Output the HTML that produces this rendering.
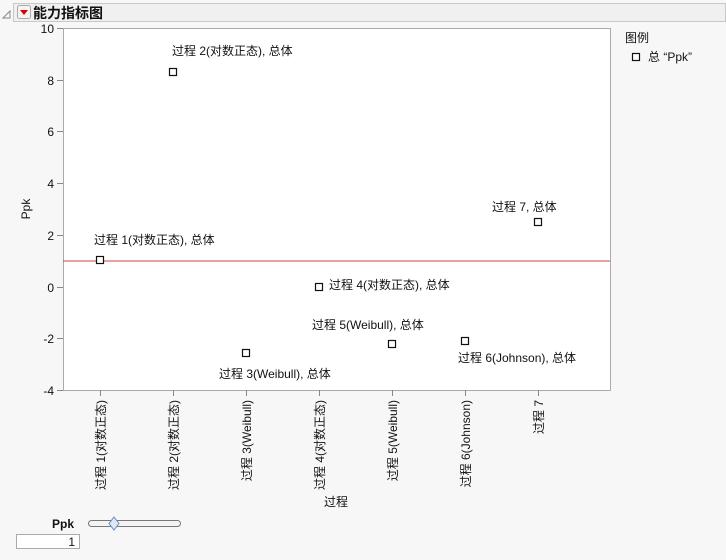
<!DOCTYPE html>
<html><head><meta charset="utf-8"><style>
body{margin:0;background:#f7f7f7;width:726px;height:555px;overflow:hidden;font-family:"Liberation Sans","Noto Sans CJK SC",sans-serif}
svg text{font-family:"Liberation Sans","Noto Sans CJK SC",sans-serif;font-size:12px;fill:#111}
</style></head><body>
<svg width="726" height="555" xmlns="http://www.w3.org/2000/svg">
<rect x="0" y="0" width="726" height="555" fill="#f7f7f7"/>
<path d="M3 18 L10 11 L10 18 Z" fill="none" stroke="#888" stroke-width="1"/>
<rect x="13.5" y="3.5" width="712" height="18" fill="#f0f0f0" stroke="#c8c8c8"/>
<rect x="17.5" y="5.5" width="13" height="13" rx="2" fill="#f4f4f4" stroke="#aaa"/>
<path d="M20 10 L28 10 L24 15 Z" fill="#d00"/>
<text x="33" y="18" style="font-size:14px;font-weight:bold">能力指标图</text>
<rect x="63.5" y="28.5" width="547" height="362" fill="#fff" stroke="#aaa"/>
<line x1="63" y1="261" x2="610" y2="261" stroke="#d04040" stroke-width="1"/>
<g stroke="#888">
<line x1="57" y1="28.5" x2="63" y2="28.5"/><line x1="57" y1="80.5" x2="63" y2="80.5"/><line x1="57" y1="131.5" x2="63" y2="131.5"/><line x1="57" y1="183.5" x2="63" y2="183.5"/><line x1="57" y1="235.5" x2="63" y2="235.5"/><line x1="57" y1="287.5" x2="63" y2="287.5"/><line x1="57" y1="338.5" x2="63" y2="338.5"/><line x1="57" y1="390.5" x2="63" y2="390.5"/>
<line x1="100.5" y1="390" x2="100.5" y2="396"/><line x1="173.5" y1="390" x2="173.5" y2="396"/><line x1="246.5" y1="390" x2="246.5" y2="396"/><line x1="319.5" y1="390" x2="319.5" y2="396"/><line x1="392.5" y1="390" x2="392.5" y2="396"/><line x1="465.5" y1="390" x2="465.5" y2="396"/><line x1="538.5" y1="390" x2="538.5" y2="396"/>
</g>
<g text-anchor="end">
<text x="54" y="33">10</text><text x="54" y="85">8</text><text x="54" y="136">6</text><text x="54" y="188">4</text><text x="54" y="240">2</text><text x="54" y="292">0</text><text x="54" y="343">-2</text><text x="54" y="395">-4</text>
</g>
<text transform="translate(30,209) rotate(-90)" text-anchor="middle">Ppk</text>
<g text-anchor="end">
<text transform="translate(105,400) rotate(-90)">过程 1(对数正态)</text>
<text transform="translate(178,400) rotate(-90)">过程 2(对数正态)</text>
<text transform="translate(251,400) rotate(-90)">过程 3(Weibull)</text>
<text transform="translate(324,400) rotate(-90)">过程 4(对数正态)</text>
<text transform="translate(397,400) rotate(-90)">过程 5(Weibull)</text>
<text transform="translate(470,400) rotate(-90)">过程 6(Johnson)</text>
<text transform="translate(543,400) rotate(-90)">过程 7</text>
</g>
<text x="336" y="506" text-anchor="middle">过程</text>
<g fill="#fff" stroke="#111" stroke-width="1.2">
<rect x="96.5" y="256.5" width="7" height="7"/><rect x="169.5" y="68.5" width="7" height="7"/><rect x="242.5" y="349.5" width="7" height="7"/><rect x="315.5" y="283.5" width="7" height="7"/><rect x="388.5" y="340.5" width="7" height="7"/><rect x="461.5" y="337.5" width="7" height="7"/><rect x="534.5" y="218.5" width="7" height="7"/>
<rect x="632.5" y="53.5" width="7" height="7"/>
</g>
<text x="94" y="244">过程 1(对数正态), 总体</text>
<text x="172" y="55">过程 2(对数正态), 总体</text>
<text x="219" y="378">过程 3(Weibull), 总体</text>
<text x="329" y="289">过程 4(对数正态), 总体</text>
<text x="312" y="329">过程 5(Weibull), 总体</text>
<text x="458" y="362">过程 6(Johnson), 总体</text>
<text x="492" y="211">过程 7, 总体</text>
<text x="625" y="42">图例</text>
<text x="648" y="61">总 “Ppk”</text>
<text x="52" y="528" style="font-weight:bold">Ppk</text>
<rect x="88.5" y="520.5" width="92" height="6" rx="3" fill="#f4f4f4" stroke="#777"/>
<path d="M114 517 L119 523.5 L114 530 L109 523.5 Z" fill="#dde8f6" stroke="#6a8cc0"/>
<rect x="16.5" y="534.5" width="63" height="14" fill="#fff" stroke="#aaa"/>
<text x="75" y="546" text-anchor="end">1</text>
</svg>
</body></html>
